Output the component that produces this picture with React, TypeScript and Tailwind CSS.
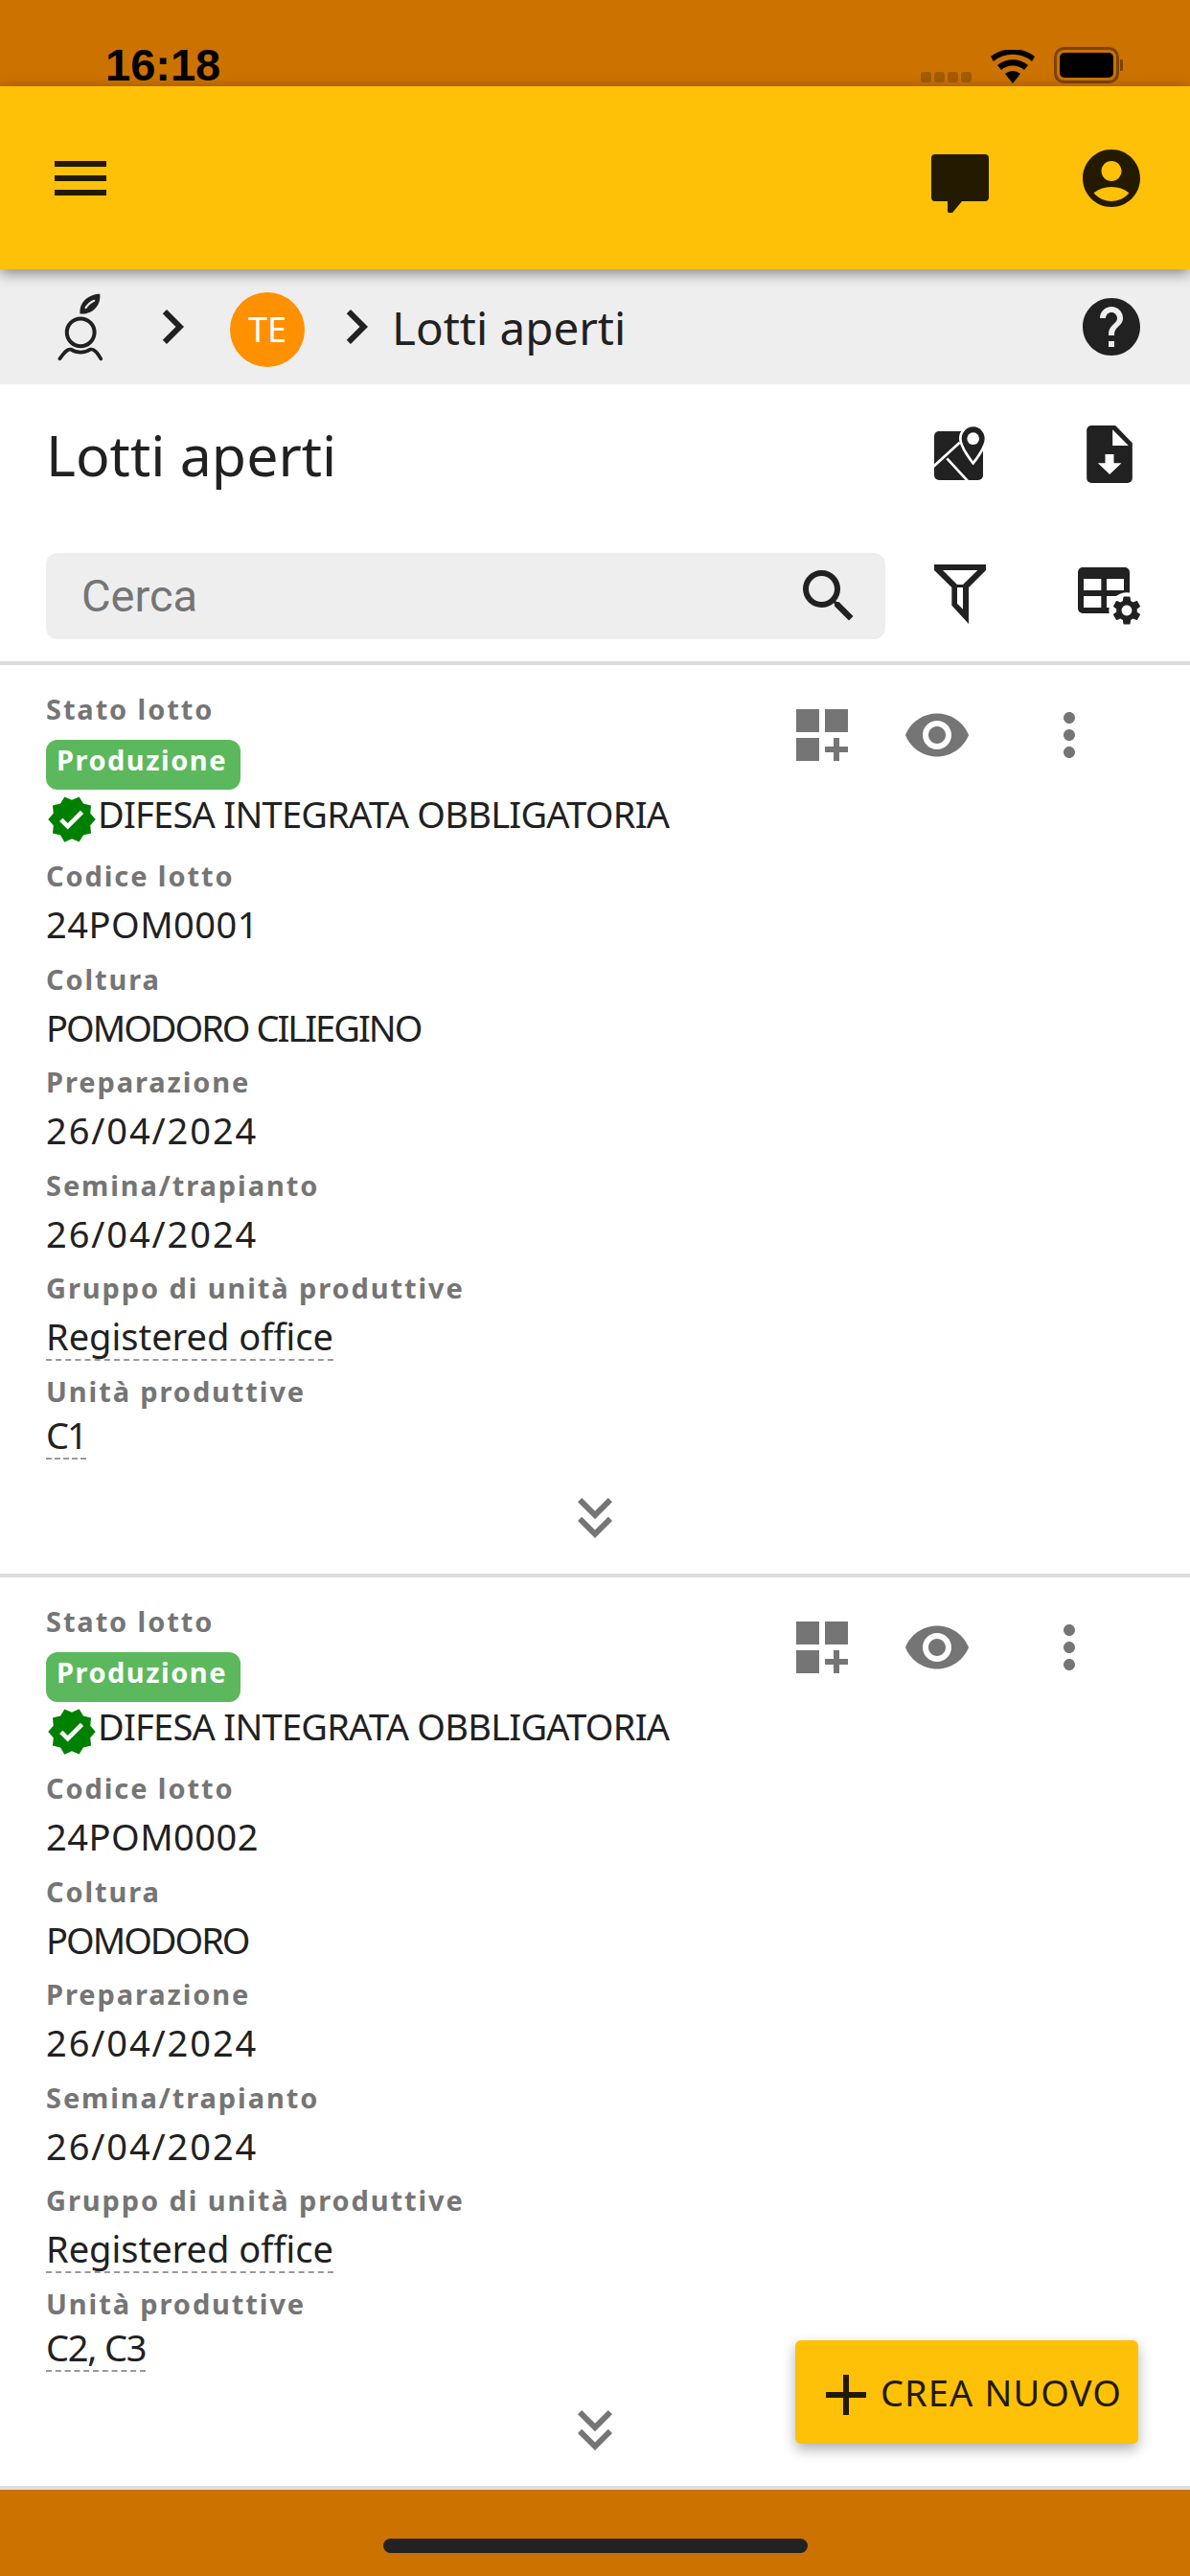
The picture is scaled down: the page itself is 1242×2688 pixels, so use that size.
import React from 'react';
import { MdMenu, MdAccountCircle, MdHelp, MdChevronRight, MdSearch, MdVerified, MdVisibility, MdMoreVert, MdKeyboardDoubleArrowDown, MdAdd } from 'react-icons/md';

const sans = { fontFamily: '"Noto Sans", sans-serif' };

const lots = [
  { code: '24POM0001', crop: 'POMODORO CILIEGINO', units: 'C1', unitsClass: 'tracking-[-2px]' },
  { code: '24POM0002', crop: 'POMODORO', units: 'C2, C3', unitsClass: 'tracking-[-1.2px]' },
];

const Label = ({ children }: { children: React.ReactNode }) => (
  <div className="h-[43px] pt-[1px] text-[29px] leading-[43px] font-bold tracking-[1.9px] text-[#757575]">{children}</div>
);

const Value = ({ children, dashed, className = '' }: { children: React.ReactNode; dashed?: boolean; className?: string }) => (
  <div className="h-[64.5px] pt-[4px]">
    <span className={`inline-block h-[52px] text-[38px] leading-[52px] text-[#212121] ${dashed ? 'border-b-2 border-dashed border-[#999]' : ''} ${className}`}>
      {children}
    </span>
  </div>
);

const GridPlus = () => (
  <svg width="54" height="54" viewBox="0 0 54 54" fill="#757575">
    <path d="M0 0h24v24H0zM30 0h24v24H30zM0 30h24v24H0zM39 30h6v9h9v6h-9v9h-6v-9h-9v-6h9z" />
  </svg>
);

const Lot = ({ code, crop, units, unitsClass }: { code: string; crop: string; units: string; unitsClass: string }) => (
  <section className="h-[952px] border-b-4 border-[#ddd] px-[48px] pt-[23px]">
    <div className="flex justify-between">
      <div>
        <Label>Stato lotto</Label>
        <div className="w-[203px] h-[52px] mt-[12px] rounded-[12px] bg-[#5cb85c] pl-[11px] text-[29px] leading-[42px] font-bold tracking-[1.5px] text-white">
          Produzione
        </div>
        <div className="flex items-center h-[50px] mb-[17px] text-[38px] text-[#212121]">
          <MdVerified size={54} color="#008000" className="shrink-0 mt-[12px]" />
          <span className="leading-[50px] tracking-[-0.75px]">DIFESA INTEGRATA OBBLIGATORIA</span>
        </div>
        <Label>Codice lotto</Label>
        <Value className="tracking-[0.5px]">{code}</Value>
        <Label>Coltura</Label>
        <Value className="tracking-[-2px]">{crop}</Value>
        <Label>Preparazione</Label>
        <Value className="tracking-[1.9px]">26/04/2024</Value>
        <Label>Semina/trapianto</Label>
        <Value className="tracking-[1.9px]">26/04/2024</Value>
        <Label>Gruppo di unità produttive</Label>
        <Value dashed>Registered office</Value>
        <Label>Unità produttive</Label>
        <Value dashed className={`-mt-[5px] ${unitsClass}`}>{units}</Value>
      </div>
      <div className="flex items-center h-[54px] mt-[23px] mr-[42px]">
        <GridPlus />
        <MdVisibility size={72} color="#757575" className="ml-[57px]" />
        <MdMoreVert size={72} color="#757575" className="ml-[66px]" />
      </div>
    </div>
    <div className="flex justify-center mt-[12px]">
      <MdKeyboardDoubleArrowDown size={72} color="#757575" />
    </div>
  </section>
);

export default function App() {
  return (
    <div className="relative flex flex-col h-[2688px] w-[1242px] overflow-hidden bg-white" style={sans}>
      {/* status bar */}
      <div className="flex h-[90px] items-end justify-between bg-[#cc7200] pl-[110px] pr-[70px]">
        <span className="text-[47px] leading-[44px] font-bold text-black" style={{ fontFamily: '"Liberation Sans", sans-serif' }}>16:18</span>
        <div className="flex items-end gap-[20px] pb-[3px]">
          <div className="flex gap-[3px] pb-[1px]">
            {[0, 1, 2, 3].map((i) => (
              <span key={i} className="w-[11px] h-[11px] rounded-[3px] bg-[#a35c00]" />
            ))}
          </div>
          <svg width="46" height="35" viewBox="0 0 46 35">
            <path d="M23 35 15 25a12 12 0 0 1 16 0z" />
            <path d="M11 21a18 18 0 0 1 24 0l4-5a25 25 0 0 0-32 0z" />
            <path d="M3 12a31 31 0 0 1 40 0l3-5A38 38 0 0 0 0 7z" />
          </svg>
          <svg width="72" height="38" viewBox="0 0 72 38">
            <rect x="1.5" y="1.5" width="65" height="35" rx="9" fill="none" stroke="#7a4400" strokeWidth="3" />
            <rect x="6" y="6" width="56" height="26" rx="5" />
            <path d="M69 13a6 6 0 0 1 0 12z" fill="#7a4400" />
          </svg>
        </div>
      </div>

      {/* header */}
      <header className="relative z-10 flex h-[191px] items-center justify-between bg-[#ffc107] pl-[48px] pr-[46px] shadow-[0_4px_14px_rgba(0,0,0,0.45)]">
        <MdMenu size={72} color="#231a00" />
        <div className="flex items-center gap-[86px]">
          <svg width="72" height="72" viewBox="0 0 72 72" fill="#231a00">
            <path d="M10 11h52a4 4 0 0 1 4 4v41a4 4 0 0 1-4 4H38l-10 12a3 3 0 0 1-5-2V60H10a4 4 0 0 1-4-4V15a4 4 0 0 1 4-4z" />
          </svg>
          <MdAccountCircle size={72} color="#231a00" />
        </div>
      </header>

      {/* breadcrumb */}
      <nav className="flex h-[120px] shrink-0 items-center bg-[#eee] pl-[60px] pr-[46px] text-[#212121]">
        <svg width="47" height="72" viewBox="180 80 140 215" fill="none" stroke="#212121" strokeWidth="12" strokeLinecap="round">
          <circle cx="252" cy="205" r="43" />
          <path d="M187 287C200 270 210 255 222 258C240 270 265 270 282 258C295 255 305 270 315 287" strokeWidth="11" />
          <path d="M250 147C246 108 280 85 312 85C316 120 290 150 250 147z" fill="#212121" stroke="none" />
          <path d="M268 128C276 116 284 110 294 106" stroke="#eee" strokeWidth="6" />
        </svg>
        <MdChevronRight size={72} className="ml-[37px]" />
        <div className="ml-[24px] flex w-[78px] h-[78px] mt-[6px] items-center justify-center rounded-full bg-[#ff9100] text-[36px] text-white">TE</div>
        <MdChevronRight size={72} className="ml-[18px]" />
        <span className="ml-[1px] mt-[2px] text-[47.500px] leading-[60px]">Lotti aperti</span>
        <MdHelp size={72} className="ml-auto" />
      </nav>

      {/* title */}
      <div className="flex h-[176px] shrink-0 items-start justify-between pl-[48px] pr-[60px] pt-[37px] text-[#212121]">
        <h1 className="text-[59px] leading-[72px]">Lotti aperti</h1>
        <div className="flex items-start gap-[105px] mt-[6px]">
          <svg width="54" height="57" viewBox="105 72 162 171">
            <rect x="105" y="90" width="153" height="153" rx="15" fill="#212121" />
            <path d="M100 203 185 125M145 175 212 248" stroke="#fff" strokeWidth="8" fill="none" />
            <path d="M227 72c-22 0-40 18-40 41c0 28 40 77 40 77s40-49 40-77c0-23-18-41-40-41z" fill="#212121" stroke="#fff" strokeWidth="8" />
            <circle cx="227" cy="113" r="19" fill="#fff" />
          </svg>
          <svg width="48" height="60" viewBox="582 72 143 180">
            <path d="M597 72h75l53 55v110a15 15 0 0 1-15 15H597a15 15 0 0 1-15-15V87a15 15 0 0 1 15-15z" fill="#212121" />
            <path d="M663 85v50h50z" fill="#fff" />
            <path d="M640 162h27v28h24l-37 35-37-35h23z" fill="#fff" />
          </svg>
        </div>
      </div>

      {/* search */}
      <div className="flex h-[90px] shrink-0 items-center pl-[48px]">
        <div className="flex h-[90px] w-[876px] items-center justify-between rounded-[12px] bg-[#eee] pl-[37px] pr-[23px]">
          <span className="text-[47px] text-[#757575]" style={{ fontFamily: 'Roboto, sans-serif' }}>Cerca</span>
          <MdSearch size={72} color="#212121" />
        </div>
        <svg width="54" height="62" viewBox="105 504 162 186" fill="#212121" fillRule="evenodd" className="ml-[51px] mt-[-4px]">
          <path d="M105 504h162v18l-54 54v114l-53-58V576l-55-54zM132 522l45 45h18l46-45zM177 576v50l18 18V576z" />
        </svg>
        <svg width="66" height="60" viewBox="555 513 198 180" className="ml-[96px]">
          <path fillRule="evenodd" fill="#212121" d="M570 513h132a15 15 0 0 1 15 15v114a15 15 0 0 1-15 15H570a15 15 0 0 1-15-15V528a15 15 0 0 1 15-15zm3 36v36h55v-36zm72 0v36h54v-36zm-72 54v36h55v-36zm72 0v36h54v-36z" />
          <circle cx="708" cy="648" r="56" fill="#fff" />
          <svg x="654" y="594" width="108" height="108" viewBox="0 0 24 24" fill="#212121">
            <path d="M19.14 12.94c.04-.3.06-.61.06-.94 0-.32-.02-.64-.07-.94l2.03-1.58c.18-.14.23-.41.12-.61l-1.92-3.32c-.12-.22-.37-.29-.59-.22l-2.39.96c-.5-.38-1.03-.7-1.62-.94l-.36-2.54c-.04-.24-.24-.41-.48-.41h-3.84c-.24 0-.43.17-.47.41l-.36 2.54c-.59.24-1.13.57-1.62.94l-2.39-.96c-.22-.08-.47 0-.59.22L2.74 8.87c-.12.21-.08.47.12.61l2.03 1.58c-.05.3-.09.63-.09.94s.02.64.07.94l-2.03 1.58c-.18.14-.23.41-.12.61l1.92 3.32c.12.22.37.29.59.22l2.39-.96c.5.38 1.03.7 1.62.94l.36 2.54c.05.24.24.41.48.41h3.84c.24 0 .44-.17.47-.41l.36-2.54c.59-.24 1.13-.56 1.62-.94l2.39.96c.22.08.47 0 .59-.22l1.92-3.32c.12-.22.07-.47-.12-.61l-2.01-1.58zM12 15.6c-1.98 0-3.6-1.62-3.6-3.6s1.62-3.6 3.6-3.6 3.6 1.62 3.6 3.6-1.62 3.6-3.6 3.6z" />
          </svg>
        </svg>
      </div>

      {/* lots */}
      <div className="mt-[23px] border-t-4 border-[#ddd]">
        {lots.map((lot) => (
          <Lot key={lot.code} {...lot} />
        ))}
      </div>

      {/* create button */}
      <button className="absolute left-[830px] top-[2442px] flex h-[108px] w-[358px] items-center rounded-[6px] bg-[#ffc107] pl-[20px] text-[38px] tracking-[1.1px] text-[#231a00] shadow-[0_6px_14px_rgba(0,0,0,0.3)]">
        <MdAdd size={72} className="shrink-0 mt-[6px] -ml-[3px]" />
        <span>CREA NUOVO</span>
      </button>

      {/* bottom bar */}
      <div className="absolute bottom-0 left-0 flex h-[90px] w-full justify-center bg-[#cc7200] pt-[51px]">
        <div className="h-[15px] w-[443px] rounded-full bg-[#222]" />
      </div>
    </div>
  );
}
